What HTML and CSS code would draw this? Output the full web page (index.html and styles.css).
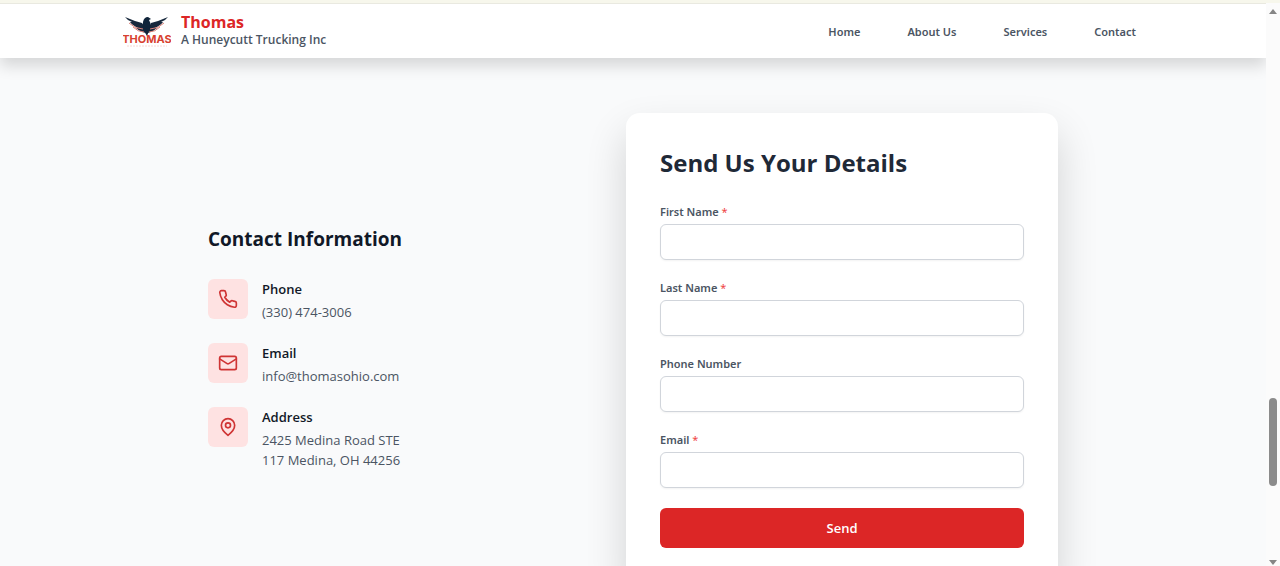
FILE: index.html
```html
<!DOCTYPE html>
<html lang="en">
<head>
    <meta charset="UTF-8">
    <meta name="viewport" content="width=device-width, initial-scale=1.0">
    <title>Thomas - Contact</title>
    <link rel="stylesheet" href="styles.css">
</head>
<body>
    <div class="page">
        <header class="header">
            <div class="header-inner">
                <a href="#" class="brand">
                    <svg class="logo" width="48" height="33" viewBox="0 0 48 33" role="img" aria-label="Thomas logo">
                        <path d="M2 2 Q11 6 19 8 L22 12 L23 18 Q17 17 13 13 L15 13 Q9 10 7 7 L9 7 Q4 5 2 2Z" fill="#17283c"/>
                        <path d="M45 2 Q36 6 28 8 L26 12 L25 18 Q30 17 34 13 L32 13 Q38 10 40 7 L38 7 Q43 5 45 2Z" fill="#17283c"/>
                        <path d="M6 8 Q12 14 20 14 M41 8 Q35 14 27 14 M10 12 Q15 17 21 17 M37 12 Q32 17 26 17" fill="none" stroke="#d98078" stroke-width="1"/>
                        <path d="M20 7 Q21 2 25 2 L28 4 L26 5 Q29 10 26 16 L24 21 L21 16 Q19 11 20 7Z" fill="#10243a"/>
                        <text x="24" y="28" class="logo-name">THOMAS</text>
                        <path d="M4 31 H44" stroke="#f7d8d4" stroke-width="1" stroke-dasharray="2 1"/>
                    </svg>
                    <span class="brand-text">
                        <span class="brand-name">Thomas</span>
                        <span class="brand-tagline">A Huneycutt Trucking Inc</span>
                    </span>
                </a>
                <nav class="nav">
                    <a href="#home">Home</a>
                    <a href="#about">About Us</a>
                    <a href="#services">Services</a>
                    <a href="#contact">Contact</a>
                </nav>
            </div>
        </header>

        <main class="contact" id="contact">
            <section class="info">
                <h2>Contact Information</h2>
                <div class="info-item">
                    <div class="info-icon">
                        <svg viewBox="0 0 24 24"><path d="M22 16.920v3a2 2 0 0 1-2.180 2 19.790 19.790 0 0 1-8.630-3.070 19.500 19.500 0 0 1-6-6 19.790 19.790 0 0 1-3.070-8.670A2 2 0 0 1 4.110 2h3a2 2 0 0 1 2 1.720 12.840 12.840 0 0 0 .7 2.810 2 2 0 0 1-.45 2.110L8.090 9.910a16 16 0 0 0 6 6l1.270-1.270a2 2 0 0 1 2.110-.45 12.840 12.840 0 0 0 2.810.7A2 2 0 0 1 22 16.920z"/></svg>
                    </div>
                    <div>
                        <h3>Phone</h3>
                        <p>(330) 474-3006</p>
                    </div>
                </div>
                <div class="info-item">
                    <div class="info-icon">
                        <svg viewBox="0 0 24 24"><rect x="2" y="4" width="20" height="16" rx="2"/><path d="m22 7-8.970 5.700a1.940 1.940 0 0 1-2.060 0L2 7"/></svg>
                    </div>
                    <div>
                        <h3>Email</h3>
                        <p>info@thomasohio.com</p>
                    </div>
                </div>
                <div class="info-item">
                    <div class="info-icon">
                        <svg viewBox="0 0 24 24"><path d="M20 10c0 6-8 12-8 12s-8-6-8-12a8 8 0 0 1 16 0Z"/><circle cx="12" cy="10" r="3"/></svg>
                    </div>
                    <div>
                        <h3>Address</h3>
                        <p>2425 Medina Road STE<br>117 Medina, OH 44256</p>
                    </div>
                </div>
            </section>

            <section class="card">
                <h1>Send Us Your Details</h1>
                <form>
                    <div class="form-group">
                        <label for="firstName">First Name <span class="required">*</span></label>
                        <input type="text" id="firstName" name="firstName" required>
                    </div>
                    <div class="form-group">
                        <label for="lastName">Last Name <span class="required">*</span></label>
                        <input type="text" id="lastName" name="lastName" required>
                    </div>
                    <div class="form-group">
                        <label for="phone">Phone Number</label>
                        <input type="tel" id="phone" name="phone">
                    </div>
                    <div class="form-group">
                        <label for="email">Email <span class="required">*</span></label>
                        <input type="email" id="email" name="email" required>
                    </div>
                    <button type="submit">Send</button>
                </form>
            </section>
        </main>
    </div>

    <div class="scrollbar" aria-hidden="true">
        <svg width="10" height="6" viewBox="0 0 10 6"><path d="M5 0 L9 5 H1Z"/></svg>
        <div class="scroll-track">
            <div class="scroll-thumb"></div>
        </div>
        <svg width="10" height="6" viewBox="0 0 10 6"><path d="M5 5 L9 0 H1Z"/></svg>
    </div>
</body>
</html>
```
FILE: styles.css
```css
* {
    box-sizing: border-box;
}

body {
    margin: 0;
    height: 100vh;
    display: flex;
    overflow: hidden;
    border-top: 3px solid #f7f7ec;
    font-family: "Open Sans", "Noto Sans", sans-serif;
    background-color: #f9fafb;
    color: #111827;
}

h1, h2, h3, p {
    margin: 0;
}

a {
    text-decoration: none;
}

.page {
    flex: 1;
    min-width: 0;
}

/* header */
.header {
    background: #fff;
    border-top: 1px solid #e9e9e0;
    box-shadow: 0 8px 14px rgba(0, 0, 0, 0.14);
}

.header-inner {
    max-width: 1020px;
    height: 54px;
    margin: 0 auto;
    display: flex;
    justify-content: space-between;
    align-items: center;
}

.brand {
    display: flex;
    align-items: center;
    gap: 10px;
}

.logo-name {
    font-family: "Inter", sans-serif;
    font-size: 11px;
    font-weight: 700;
    text-anchor: middle;
    fill: #d8412f;
}

.brand-text {
    display: flex;
    flex-direction: column;
}

.brand-name {
    font-size: 16px;
    line-height: 18px;
    font-weight: 700;
    color: #dc2626;
}

.brand-tagline {
    font-size: 12px;
    line-height: 18px;
    font-weight: 600;
    color: #4b5563;
}

.nav {
    display: flex;
    gap: 47px;
    padding-right: 7px;
}

.nav a {
    font-family: "Noto Sans", sans-serif;
    font-size: 11px;
    font-weight: 600;
    color: #4b5563;
}

/* contact section */
.contact {
    max-width: 850px;
    margin: 0 auto;
    padding-top: 55px;
    display: flex;
    justify-content: space-between;
    align-items: center;
}

.info h2 {
    font-size: 19px;
    line-height: 28px;
    font-weight: 700;
    margin-bottom: 26px;
}

.info-item {
    display: flex;
    align-items: flex-start;
    gap: 14px;
    margin-bottom: 21px;
}

.info-item:last-child {
    margin-bottom: 0;
}

.info-icon {
    width: 40px;
    height: 40px;
    border-radius: 6px;
    background: #fee2e2;
    display: flex;
    justify-content: center;
    align-items: center;
}

.info-icon svg {
    width: 20px;
    height: 20px;
    fill: none;
    stroke: #cf3434;
    stroke-width: 2;
    stroke-linecap: round;
    stroke-linejoin: round;
}

.info-item h3 {
    font-size: 13px;
    line-height: 20px;
    font-weight: 600;
    margin-bottom: 3px;
}

.info-item p {
    font-size: 13px;
    line-height: 20px;
    color: #4b5563;
}

.card {
    width: 432px;
    padding: 34px;
    background: #fff;
    border-radius: 14px;
    box-shadow: 0 20px 40px rgba(0, 0, 0, 0.16);
}

.card h1 {
    font-size: 24px;
    line-height: 32px;
    font-weight: 700;
    color: #1f2937;
    margin-bottom: 25px;
}

.form-group {
    margin-bottom: 20px;
}

label {
    display: block;
    font-family: "Noto Sans", sans-serif;
    font-size: 11px;
    line-height: 16px;
    font-weight: 600;
    color: #4b5563;
    margin-bottom: 4px;
}

.required {
    color: #ef4444;
    font-weight: 400;
}

input {
    display: block;
    width: 100%;
    height: 36px;
    padding: 8px 12px;
    border: 1px solid #d1d5db;
    border-radius: 6px;
    background: #fff;
    font: inherit;
    font-size: 13px;
    box-shadow: 0 1px 2px rgba(0, 0, 0, 0.05);
}

button {
    display: block;
    width: 100%;
    height: 40px;
    border: none;
    border-radius: 6px;
    background-color: #dc2626;
    color: #fff;
    font-family: inherit;
    font-size: 13px;
    font-weight: 600;
    cursor: pointer;
}

/* scrollbar strip */
.scrollbar {
    width: 14px;
    padding: 6px 0 0;
    display: flex;
    flex-direction: column;
    align-items: center;
    background: #fbfbfb;
}

.scrollbar svg {
    fill: #858585;
}

.scroll-track {
    flex: 1;
    display: flex;
    flex-direction: column;
    padding-top: 383px;
}

.scroll-thumb {
    width: 8px;
    height: 88px;
    border-radius: 4px;
    background: #8b8b8b;
}
```
